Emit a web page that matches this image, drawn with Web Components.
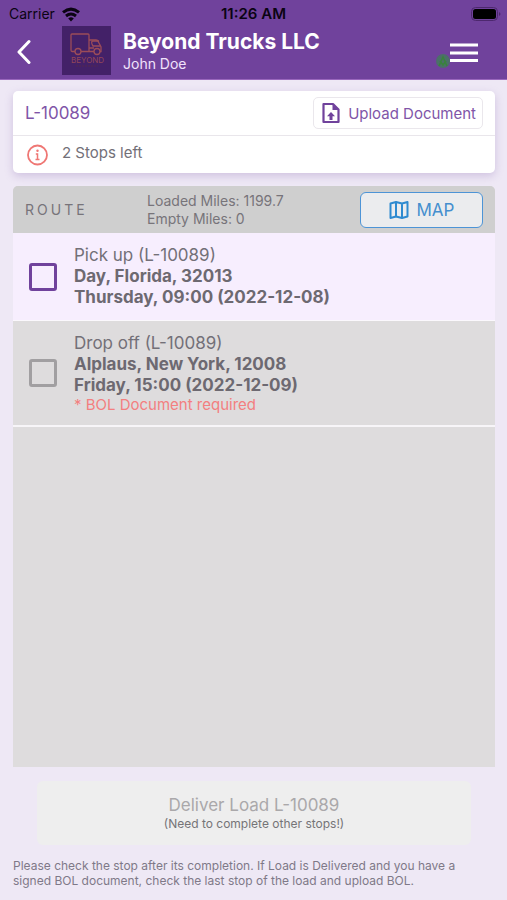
<!DOCTYPE html>
<html lang="en">
<head>
<meta charset="utf-8">
<meta name="viewport" content="width=device-width, initial-scale=1">
<title>Load L-10089</title>
<style>
  body { margin: 0; background: #eee8f5; color: #737078; font-family: Inter, "Liberation Sans", sans-serif; }
</style>
</head>
<body>
<load-page></load-page>
<script>
const define = (name, html) => {
  const template = document.createElement('template');
  template.innerHTML = '<style>*{box-sizing:border-box}button,input{font:inherit;margin:0}svg{display:block;flex:none}</style>' + html;
  customElements.define(name, class extends HTMLElement {
    constructor() {
      super();
      this.attachShadow({ mode: 'open' }).append(template.content.cloneNode(true));
    }
  });
};

define('status-bar', `
<style>
  :host { display: grid; grid-template-columns: 1fr auto 1fr; align-items: center; height: 26px; padding: 2px 9px 0 9px; color: #0b0413; font-size: 14px; line-height: 20px; }
  .left { display: flex; align-items: center; gap: 6px; }
  .time { font-size: 15px; font-weight: 600; }
  .battery { justify-self: end; margin-right: -4px; }
</style>
<div class="left"><span>Carrier</span>
  <svg width="20" height="15" viewBox="0 0 20 15" fill="none" stroke="#0b0413" stroke-width="3" aria-hidden="true"><path d="M2 5.400Q10-1.200 18 5.400M5 9Q10 5 15 9"/><path d="M10 14.500 7.200 11.400Q10 9.300 12.800 11.400Z" fill="#0b0413" stroke="none"/></svg>
</div>
<span class="time">11:26 AM</span>
<svg class="battery" width="31" height="14" viewBox="0 0 31 14" aria-hidden="true"><rect x=".5" y=".5" width="26" height="13" rx="4" fill="none" stroke="#4d286e"/><rect x="2" y="2" width="23" height="10" rx="2.500" fill="#000"/><path d="M28 5q3 2 0 4z" fill="#4d286e"/></svg>`);

define('company-logo', `
<style>:host { display: block; flex: none; }</style>
<svg width="49" height="49" viewBox="0 0 49 49" role="img" aria-label="Beyond"><rect width="49" height="49" fill="#432168"/>
<g fill="none" stroke="#9c4c58" stroke-width="1.300"><path d="M13 25.500H10Q9 25.500 9 24V9Q9 8 10 8H26Q27 8 27 9V25.500H19M27 14H34Q36 14 37 17L39 21V25.500H38M32 25.500H27"/><circle cx="16" cy="25.500" r="3"/><circle cx="35" cy="25.500" r="3"/><path d="M37 15H31Q29 15 30 18L31 20H38M27 22H32"/></g>
<text x="9" y="37" font-family="Inter, sans-serif" font-size="8" fill="#944758">BEYOND</text><path d="M14 40H36" stroke="#55294f" stroke-dasharray="2 1"/></svg>`);

define('app-header', `
<style>
  :host { display: block; background: #70429c; border-bottom: 1px solid #9967bd; }
  .bar { display: flex; align-items: center; height: 53px; padding: 0 29px 4px 14px; }
  button { border: 0; padding: 0; background: none; display: block; flex: none; }
  .back { margin-right: 26px; }
  .names { flex: 1; padding: 2px 0 0 12px; color: #fff; }
  h1 { margin: 0; font-size: 21px; line-height: 24px; font-weight: 700; }
  p { margin: 0; font-size: 14px; line-height: 20px; color: #f0e2fb; }
  .menu { position: relative; padding-top: 5px; }
  .dot { position: absolute; left: -15px; top: 14px; }
</style>
<status-bar></status-bar>
<div class="bar">
  <button class="back" aria-label="Back"><svg width="22" height="26" viewBox="0 0 22 26" fill="none" stroke="#fff" stroke-width="3" stroke-linecap="round" stroke-linejoin="round"><path d="M15 3.500 5 14 15 24.500"/></svg></button>
  <company-logo></company-logo>
  <div class="names"><h1><slot name="company"></slot></h1><p><slot name="driver"></slot></p></div>
  <button class="menu" aria-label="Menu"><svg width="28" height="20" viewBox="0 0 28 20" stroke="#fff" stroke-width="3"><path d="M0 2H28M0 10H28M0 17.500H28"/></svg>
    <svg class="dot" width="16" height="16" viewBox="0 0 16 16" aria-hidden="true"><circle cx="8" cy="9" r="7" fill="#4c6f69"/><path d="M4 14 8 5l4 9M5 9l3 4 3-4" fill="none" stroke="#39833c" stroke-width="1.500"/></svg>
  </button>
</div>`);

define('load-card', `
<style>
  :host { display: block; background: #fff; border-radius: 5px; box-shadow: 0 3px 8px #9478b855; font-size: 16px; }
  .row { display: flex; align-items: center; padding: 0 12px; }
  .top { height: 45px; border-bottom: 1px solid #e9e6eb; justify-content: space-between; color: #70429c; }
  .load { color: #8055a8; font-size: 17px; }
  button { display: flex; align-items: center; gap: 6px; height: 32px; padding: 0 6px; border: 1px solid #eae7ec; border-radius: 5px; background: #fff; color: #8055a8; font-size: 15px; }
  .bottom { height: 37px; gap: 13px; font-size: 15px; }
  .bottom span { padding-bottom: 4px; }
</style>
<div class="row top"><span class="load"><slot name="load"></slot></span>
  <button><svg width="22" height="24" viewBox="0 0 22 24" aria-hidden="true"><path d="M5 3H13L18.500 8.500V21H3.500V3Z" fill="none" stroke="#70429c" stroke-width="2.200" stroke-linejoin="round"/><path d="M12.500 3V9H18.500Z" fill="#70429c"/><path d="M11 11 15 15.200H12.500V19H9.500V15.200H7Z" fill="#70429c"/></svg>Upload Document</button></div>
<div class="row bottom"><svg width="24" height="24" viewBox="0 0 24 24" fill="none" stroke="#ef7774" aria-hidden="true"><circle cx="12.500" cy="12" r="9.500" stroke-width="1.800"/><path d="M10.800 11H12.500V16.500M10.500 16.500H14.500" stroke-width="1.500"/><circle cx="12.500" cy="7.700" r="1.200" fill="#ef7774" stroke="none"/></svg><span><slot name="status"></slot></span></div>`);

define('route-header', `
<style>
  :host { display: flex; align-items: center; height: 47px; padding: 0 12px; background: #cfcfcf; border-radius: 5px 5px 0 0; color: #77747a; }
  h2 { margin: 0; flex: 0 0 122px; font-size: 14px; font-weight: 400; letter-spacing: 3px; }
  .miles { flex: 1; font-size: 14px; line-height: 18px; }
  button { display: flex; align-items: center; justify-content: center; gap: 8px; width: 123px; height: 36px; padding: 0; border: 1px solid #4d94d6; border-radius: 6px; background: #ebecee; color: #458fce; font-size: 17px; }
</style>
<h2>ROUTE</h2>
<div class="miles"><slot></slot></div>
<button><svg width="20" height="20" viewBox="0 0 20 20" fill="none" stroke="#2e8ad0" stroke-width="2" stroke-linejoin="round" aria-hidden="true"><path d="M1.500 3.500 7 2 13 3.500 18.500 2V16.500L13 18 7 16.500 1.500 18ZM7 2V16.500M13 3.500V18"/></svg>MAP</button>`);

define('route-stop', `
<style>
  :host { display: block; background: #f7eefe; border-bottom: 1px solid #fbf8fd; --box: #70429c; }
  :host([pending]) { background: #dedcdd; --box: #a19fa1; border-bottom: 2px solid #f7f5f8; }
  label { display: flex; align-items: center; gap: 17px; padding: 12px 16px; font-size: 17px; line-height: 21px; }
  input { appearance: none; flex: none; width: 28px; height: 28px; border: 3px solid var(--box); border-radius: 3px; }
  span { display: block; }
  .strong { font-weight: 700; color: #6d6971; }
  ::slotted([slot=note]) { display: block; color: #f37f80; font-size: 15px; line-height: 17px; }
</style>
<label><input type="checkbox"><span><span><slot name="kind"></slot></span><span class="strong"><slot name="place"></slot></span><span class="strong"><slot name="time"></slot></span><slot name="note"></slot></span></label>`);

define('deliver-action', `
<style>
  :host { display: block; padding: 14px 24px 13px; }
  button { display: block; width: 100%; padding: 14px 0 13px; border: 0; border-radius: 6px; background: #eee; color: #aaa8aa; font-size: 17px; line-height: 21px; }
  small { display: block; color: #757477; font-size: 12px; line-height: 16px; }
</style>
<button disabled><slot></slot><small><slot name="hint"></slot></small></button>`);

define('load-page', `
<style>
  :host { display: flex; flex-direction: column; min-height: 100vh; }
  main { flex: 1; display: flex; flex-direction: column; padding: 11px 12px 12px 13px; }
  load-card { margin-bottom: 13px; }
  .route { flex: 1; background: #dedcdd; border-radius: 5px 5px 0 0; }
  .note { margin: 0; font-size: 12px; line-height: 15px; color: #7f7988; }
</style>
<app-header><span slot="company">Beyond Trucks LLC</span><span slot="driver">John Doe</span></app-header>
<main>
  <load-card><span slot="load">L-10089</span><span slot="status">2 Stops left</span></load-card>
  <section class="route">
    <route-header>Loaded Miles: 1199.7<br>Empty Miles: 0</route-header>
    <route-stop><span slot="kind">Pick up (L-10089)</span><span slot="place">Day, Florida, 32013</span><span slot="time">Thursday, 09:00 (2022-12-08)</span></route-stop>
    <route-stop pending><span slot="kind">Drop off (L-10089)</span><span slot="place">Alplaus, New York, 12008</span><span slot="time">Friday, 15:00 (2022-12-09)</span><span slot="note">* BOL Document required</span></route-stop>
  </section>
  <deliver-action>Deliver Load L-10089<span slot="hint">(Need to complete other stops!)</span></deliver-action>
  <p class="note">Please check the stop after its completion. If Load is Delivered and you have a signed BOL document, check the last stop of the load and upload BOL.</p>
</main>`);
</script>
</body>
</html>
